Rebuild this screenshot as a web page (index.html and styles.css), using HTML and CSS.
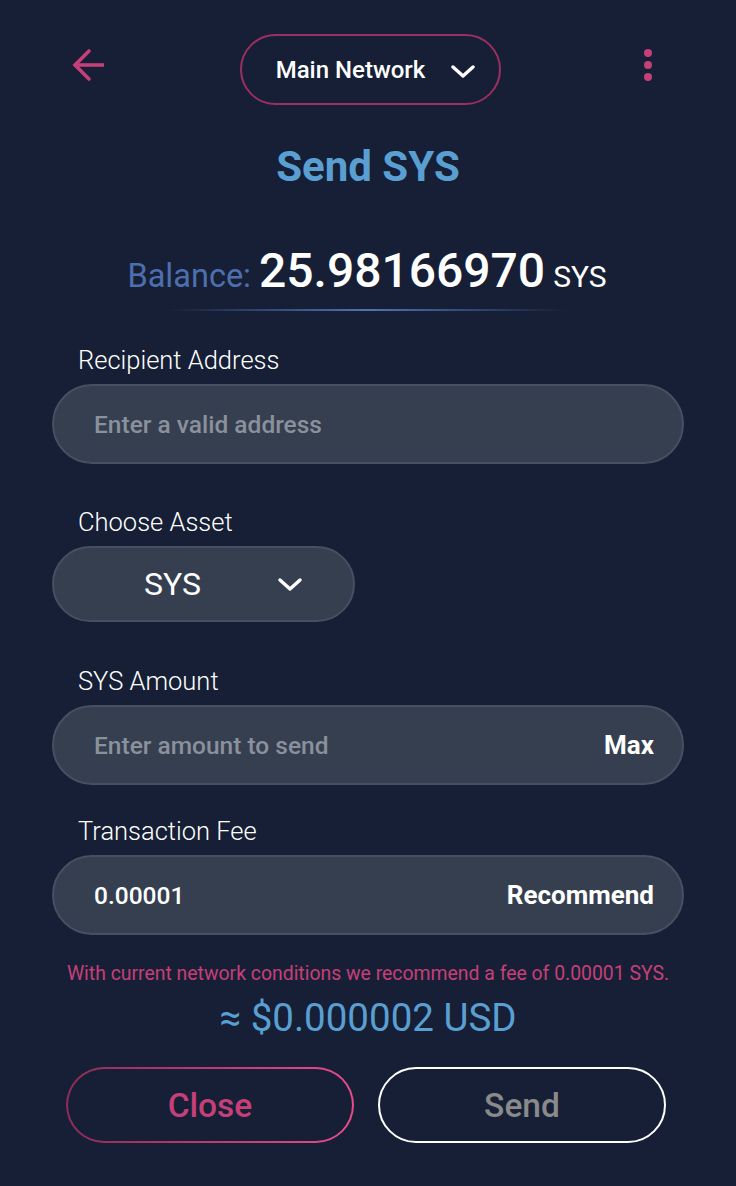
FILE: index.html
```html
<!DOCTYPE html>
<html lang="en">
<head>
<meta charset="utf-8">
<title>Send SYS</title>
<link rel="stylesheet" href="styles.css">
</head>
<body>
<div class="page">
  <header class="topbar">
    <button class="icon-btn back" aria-label="Back">
      <svg width="36" height="34" viewBox="0 0 36 34" fill="none" stroke="#c63f78" stroke-width="3.6" stroke-linejoin="miter">
        <path d="M34 17H5"/>
        <path d="M19 3L5 17l14 14" stroke-linecap="round"/>
      </svg>
    </button>
    <button class="network-pill">
      <span>Main Network</span>
      <svg class="chev" width="24" height="16" viewBox="0 0 24 16" fill="none" stroke="#fff" stroke-width="3.4" stroke-linecap="round" stroke-linejoin="round">
        <path d="M2 4l10 9 10-9"/>
      </svg>
    </button>
    <button class="icon-btn kebab" aria-label="More">
      <span></span><span></span><span></span>
    </button>
  </header>

  <h1 class="title">Send SYS</h1>

  <div class="balance">
    <span class="balance-label">Balance:</span>
    <span class="balance-value">25.98166970</span>
    <span class="balance-unit">SYS</span>
  </div>
  <div class="divider"></div>

  <form class="form">
    <div class="field field-recipient">
      <label class="label">Recipient Address</label>
      <div class="input"><span class="placeholder">Enter a valid address</span></div>
    </div>

    <div class="field field-asset">
      <label class="label">Choose Asset</label>
      <div class="select">
        <span class="select-value">SYS</span>
        <svg width="26" height="16" viewBox="0 0 26 16" fill="none" stroke="#fff" stroke-width="3.4" stroke-linecap="round" stroke-linejoin="round">
          <path d="M3 4l10 9 10-9"/>
        </svg>
      </div>
    </div>

    <div class="field field-amount">
      <label class="label">SYS Amount</label>
      <div class="input"><span class="placeholder">Enter amount to send</span><span class="action">Max</span></div>
    </div>

    <div class="field field-fee">
      <label class="label">Transaction Fee</label>
      <div class="input"><span class="value">0.00001</span><span class="action">Recommend</span></div>
    </div>
  </form>

  <p class="warning">With current network conditions we recommend a fee of 0.00001 SYS.</p>
  <p class="usd">≈ $0.000002 USD</p>

  <div class="actions">
    <button class="btn btn-close">Close</button>
    <button class="btn btn-send">Send</button>
  </div>
</div>
</body>
</html>
```

FILE: styles.css
```css
* { box-sizing: border-box; }

html, body {
  margin: 0;
  padding: 0;
  background: #161f35;
}

body {
  font-family: Roboto, "Noto Sans", sans-serif;
  color: #fff;
  width: 736px;
  min-height: 1186px;
}

button {
  font-family: inherit;
  background: none;
  border: none;
  padding: 0;
  cursor: pointer;
}

.page {
  padding-top: 34px;
  display: flex;
  flex-direction: column;
}

.topbar {
  display: grid;
  grid-template-columns: 1fr auto 1fr;
  align-items: center;
  height: 71px;
  padding: 0 65px 0 70px;
}

.back {
  justify-self: start;
  display: flex;
  margin-top: -10px;
}

.kebab {
  justify-self: end;
  display: flex;
  flex-direction: column;
  gap: 4px;
  margin-top: -10px;
  margin-right: 19px;
}

.kebab span {
  width: 8px;
  height: 8px;
  border-radius: 50%;
  background: #c63f78;
}

.network-pill {
  height: 71px;
  width: 261px;
  border: 2px solid #9a2f60;
  border-radius: 36px;
  display: flex;
  align-items: center;
  justify-content: center;
  gap: 26px;
  color: #fff;
  font-size: 24px;
  font-weight: 500;
  padding-left: 10px;
}

.network-pill .chev { margin-top: 2px; }

.title {
  margin: 38px 0 0;
  text-align: center;
  font-size: 42px;
  line-height: 48px;
  font-weight: 700;
  color: #5a9fd2;
}

.balance {
  margin-top: 52px;
  display: flex;
  justify-content: center;
  align-items: baseline;
  gap: 8px;
  height: 56px;
  line-height: 56px;
  padding-right: 2px;
}

.balance-label {
  font-size: 32.5px;
  color: #4d6fae;
}

.balance-value {
  font-size: 48px;
  font-weight: 500;
  color: #fff;
}

.balance-unit {
  font-size: 30px;
  color: #fff;
}

.divider {
  margin: 10px auto 0;
  width: 400px;
  height: 2px;
  background: linear-gradient(90deg, rgba(79,116,182,0) 0%, #4f74b6 50%, rgba(79,116,182,0) 100%);
}

.form {
  margin-top: 34px;
  padding: 0 52px;
  display: flex;
  flex-direction: column;
}

.field {
  display: flex;
  flex-direction: column;
  gap: 9px;
  align-items: flex-start;
}

.field-asset { margin-top: 43px; }
.field-amount { margin-top: 44px; }
.field-fee { margin-top: 31px; }

.label {
  padding-left: 26px;
  font-size: 25.5px;
  line-height: 30px;
  font-weight: 300;
  color: #fff;
}

.input {
  width: 100%;
  height: 80px;
  border-radius: 40px;
  background: #363f50;
  border: 2px solid #465062;
  display: flex;
  align-items: center;
  justify-content: space-between;
  padding: 0 28px 0 40px;
  font-size: 24.5px;
  font-weight: 500;
}

.placeholder { color: #8a919c; }
.value { color: #fff; }
.action { color: #fff; font-weight: 700; font-size: 26px; }

.select {
  width: 303px;
  height: 76px;
  border-radius: 38px;
  background: #363f50;
  border: 2px solid #465062;
  display: flex;
  align-items: center;
  padding: 0 50px 0 90px;
  justify-content: space-between;
}

.select-value {
  font-size: 32px;
  font-weight: 400;
  color: #fff;
}

.warning {
  margin: 27px 0 0;
  text-align: center;
  font-size: 19.4px;
  line-height: 24px;
  color: #c63f78;
}

.usd {
  margin: 10px 0 0;
  text-align: center;
  font-size: 38.5px;
  line-height: 44px;
  color: #5a9fd2;
}

.actions {
  margin-top: 27px;
  display: flex;
  justify-content: center;
  gap: 24px;
  padding-right: 4px;
}

.btn {
  width: 288px;
  height: 76px;
  border-radius: 38px;
  font-size: 33.5px;
  font-weight: 500;
}

.btn-close {
  color: #c63f78;
  border: 2px solid transparent;
  background:
    linear-gradient(#161f35, #161f35) padding-box,
    linear-gradient(90deg, #8e2c58, #e84b8b) border-box;
}

.btn-send {
  color: #8a8a8a;
  border: 2px solid #ffffff;
}
```
